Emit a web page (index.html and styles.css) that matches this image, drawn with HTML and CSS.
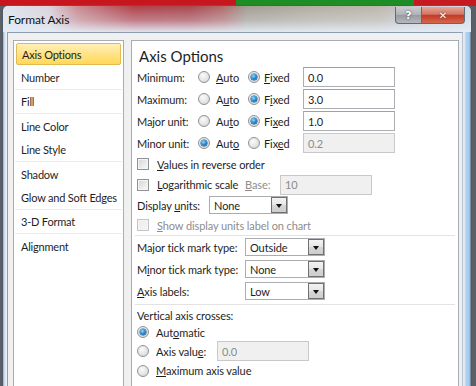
FILE: index.html
```html
<!DOCTYPE html>
<html lang="en">
<head>
    <meta charset="UTF-8">
    <meta name="viewport" content="width=device-width, initial-scale=1.0">
    <title>Format Axis</title>
    <link rel="stylesheet" href="styles.css">
</head>
<body>
    <div class="window">
        <div class="titlebar">
            <span class="title">Format Axis</span>
            <div class="caption-buttons">
                <span class="cap-btn help">?</span>
                <span class="cap-btn close">&#x2715;</span>
            </div>
        </div>
        <div class="client">
            <ul class="nav-list">
                <li class="nav-item selected">Axis Options</li>
                <li class="nav-item sep">Number</li>
                <li class="nav-item sep">Fill</li>
                <li class="nav-item">Line Color</li>
                <li class="nav-item sep">Line Style</li>
                <li class="nav-item">Shadow</li>
                <li class="nav-item sep">Glow and Soft Edges</li>
                <li class="nav-item sep">3-D Format</li>
                <li class="nav-item">Alignment</li>
            </ul>

            <div class="panel">
                <h2 class="panel-title">Axis Options</h2>

                <div class="unit-row">
                    <span class="unit-label">Minimum:</span>
                    <span class="opt opt-auto"><span class="radio"></span><span><u>A</u>uto</span></span>
                    <span class="opt opt-fixed"><span class="radio checked"></span><span><u>F</u>ixed</span></span>
                    <span class="textbox">0.0</span>
                </div>
                <div class="unit-row">
                    <span class="unit-label">Maximum:</span>
                    <span class="opt opt-auto"><span class="radio"></span><span>A<u>u</u>to</span></span>
                    <span class="opt opt-fixed"><span class="radio checked"></span><span>F<u>i</u>xed</span></span>
                    <span class="textbox">3.0</span>
                </div>
                <div class="unit-row">
                    <span class="unit-label">Major unit:</span>
                    <span class="opt opt-auto"><span class="radio"></span><span>Au<u>t</u>o</span></span>
                    <span class="opt opt-fixed"><span class="radio checked"></span><span>Fi<u>x</u>ed</span></span>
                    <span class="textbox">1.0</span>
                </div>
                <div class="unit-row">
                    <span class="unit-label">Minor unit:</span>
                    <span class="opt opt-auto"><span class="radio checked"></span><span>Aut<u>o</u></span></span>
                    <span class="opt opt-fixed"><span class="radio"></span><span>Fix<u>e</u>d</span></span>
                    <span class="textbox disabled">0.2</span>
                </div>

                <div class="check-row h20">
                    <span class="checkbox"></span><span><u>V</u>alues in reverse order</span>
                </div>
                <div class="check-row h21">
                    <span class="checkbox"></span><span class="log-label"><u>L</u>ogarithmic scale</span>
                    <span class="muted base-label"><u>B</u>ase:</span>
                    <span class="textbox disabled">10</span>
                </div>
                <div class="check-row h20">
                    <span class="display-label">Display <u>u</u>nits:</span>
                    <span class="combo w-display"><span class="combo-text">None</span><span class="combo-btn"></span></span>
                </div>
                <div class="check-row h20 muted">
                    <span class="checkbox disabled"></span><span><u>S</u>how display units label on chart</span>
                </div>

                <div class="separator"></div>

                <div class="tick-row">
                    <span class="tick-label">Ma<u>j</u>or tick mark type:</span>
                    <span class="combo"><span class="combo-text">Outside</span><span class="combo-btn"></span></span>
                </div>
                <div class="tick-row">
                    <span class="tick-label">M<u>i</u>nor tick mark type:</span>
                    <span class="combo"><span class="combo-text">None</span><span class="combo-btn"></span></span>
                </div>
                <div class="tick-row">
                    <span class="tick-label"><u>A</u>xis labels:</span>
                    <span class="combo"><span class="combo-text">Low</span><span class="combo-btn"></span></span>
                </div>

                <div class="separator sep-low"></div>

                <div class="cross-title">Vertical axis crosses:</div>
                <div class="cross-row r-auto">
                    <span class="radio checked"></span><span>Aut<u>o</u>matic</span>
                </div>
                <div class="cross-row r-value">
                    <span class="radio"></span><span class="value-label">Axis valu<u>e</u>:</span>
                    <span class="textbox disabled">0.0</span>
                </div>
                <div class="cross-row r-max">
                    <span class="radio"></span><span><u>M</u>aximum axis value</span>
                </div>
            </div>
        </div>
    </div>
</body>
</html>
```

FILE: styles.css
```css
/* Format Axis dialog, Windows 7 look */
body {
    margin: 0;
    height: 386px;
    overflow: hidden;
    font-family: Lato, "Noto Sans", sans-serif;
    font-size: 11px;
    letter-spacing: -0.1px;
    color: #1e1e1e;
    background:
        linear-gradient(to right, #c8161e 0, #c8161e 236px, #1f8d25 236px, #1f8d25 414px, #c41a20 414px) top / 100% 6px no-repeat,
        #5b6068;
}

.window {
    margin: 5px 0 0 2px;
    width: 470px;
    height: 381px;
    box-sizing: border-box;
    border: 1px solid #4f5a66;
    border-bottom: none;
    border-radius: 6px 6px 0 0;
    background: linear-gradient(to right, #8cb0d8 0, #dfe8f1 2px, #e9eef4 4px, #e9eef4 calc(100% - 9px), #dfe6ee calc(100% - 6px), #a9cdf3 calc(100% - 5px), #a9cdf3 calc(100% - 2px), #6f7a86 100%);
    overflow: hidden;
}

.titlebar {
    height: 26px;
    display: flex;
    align-items: flex-start;
    background:
        linear-gradient(to bottom, rgba(228, 236, 246, 0) 0%, rgba(228, 236, 246, 0.35) 55%, rgba(228, 236, 246, 0.95) 100%),
        linear-gradient(to right, #dfe6ef 0%, #d9d3da 10%, #c98b91 16%, #b0414a 28%, #a94850 40%, #b06a6a 47%, #a39c92 52%, #b3aea1 66%, #bdb6ab 80%, #c8c9cc 88%, #d4dde8 100%);
}

.title {
    font-size: 12px;
    color: #111;
    margin: 6px 0 0 5px;
}

.caption-buttons {
    display: flex;
    margin: 1px 0 0 auto;
    margin-right: 6px;
}

.cap-btn {
    height: 17px;
    box-sizing: border-box;
    display: flex;
    align-items: center;
    justify-content: center;
    color: #fff;
    font-family: "DejaVu Sans", sans-serif;
    font-weight: bold;
    border: 1px solid #5e6a78;
    border-top: none;
    text-shadow: 0 0 2px #333;
}

.help {
    width: 27px;
    font-size: 11px;
    border-radius: 0 0 0 4px;
    background: linear-gradient(to bottom, #c9ccd1 0%, #aeb2b8 50%, #979ba1 51%, #b5b9be 100%);
}

.close {
    width: 43px;
    font-size: 10px;
    border-left: none;
    border-radius: 0 0 4px 0;
    background: linear-gradient(to bottom, #e5a597 0%, #d57565 45%, #c33b26 52%, #d4664d 100%);
}

.client {
    margin-left: 4px;
    width: 456px;
    height: 354px;
    box-sizing: border-box;
    border: 1px solid #8e9daf;
    border-bottom: none;
    border-right-color: #b9c3cf;
    background: #f0f0f0;
    display: flex;
    align-items: flex-start;
    padding: 7px 0 0 5px;
    gap: 7px;
}

/* left category list */
.nav-list {
    list-style: none;
    margin: 0;
    padding: 1px;
    width: 111px;
    height: 360px;
    box-sizing: border-box;
    background: #fff;
    border: 1px solid #a5acb5;
}

.nav-item {
    height: 24px;
    box-sizing: border-box;
    display: flex;
    align-items: center;
    padding-left: 6px;
    white-space: nowrap;
    letter-spacing: -0.2px;
}

.nav-item.sep {
    border-bottom: 1px solid #ececec;
}

.nav-item.selected {
    margin: 1px;
    height: 22px;
    padding-left: 5px;
    border: 1px solid #e0bb52;
    border-radius: 2px;
    background: linear-gradient(to bottom, #fff0b8 0%, #ffe48e 45%, #ffd955 100%);
}

/* right options panel */
.panel {
    width: 328px;
    height: 360px;
    box-sizing: border-box;
    background: #fff;
    border: 1px solid #a5acb5;
    padding: 5px 0 0 5px;
}

.panel-title {
    margin: 0;
    height: 20px;
    line-height: 20px;
    font-size: 15px;
    font-weight: normal;
    letter-spacing: 0;
    padding-left: 2px;
}

.unit-row,
.check-row,
.tick-row,
.cross-row {
    display: flex;
    align-items: center;
    white-space: nowrap;
}

.unit-row {
    height: 22px;
}

.unit-label {
    width: 61px;
}

.opt {
    display: flex;
    align-items: center;
    gap: 6px;
}

.opt-auto {
    width: 50px;
}

.opt-fixed {
    width: 55px;
    gap: 4px;
}

.textbox {
    width: 92px;
    height: 20px;
    box-sizing: border-box;
    border: 1px solid #abadb3;
    border-top-color: #9da0a7;
    padding-left: 4px;
    display: flex;
    align-items: center;
    background: #fff;
}

.textbox.disabled {
    background: #f0f0f0;
    border-color: #c9c9c9;
    color: #8b8b8b;
}

.radio {
    width: 12px;
    height: 12px;
    flex: none;
    box-sizing: border-box;
    border-radius: 50%;
    border: 1px solid #8f9396;
    background: radial-gradient(circle at 40% 35%, #fbfbfb 0%, #e2e2e2 60%, #cfcfcf 100%);
    display: flex;
    align-items: center;
    justify-content: center;
}

.radio.checked::after {
    content: "";
    width: 6px;
    height: 6px;
    border-radius: 50%;
    background: radial-gradient(circle at 40% 35%, #8fe0ff 0%, #2a8fd6 45%, #114c8c 100%);
    box-shadow: 0 0 0 0.5px #1c4f7e;
}

.checkbox {
    width: 12px;
    height: 12px;
    flex: none;
    box-sizing: border-box;
    border: 1px solid #8f9396;
    background: linear-gradient(135deg, #d5d5d5 0%, #e8e8e8 50%, #fafafa 100%);
    box-shadow: inset 0 0 0 1px #f4f4f4;
}

.checkbox.disabled {
    border-color: #c2c4c6;
    background: linear-gradient(135deg, #ececec 0%, #f5f5f5 100%);
}

.check-row {
    gap: 8px;
}

.h20 {
    height: 20px;
}

.h21 {
    height: 21px;
}

.log-label {
    width: 80px;
}

.base-label {
    width: 27px;
}

.muted {
    color: #8d8d8d;
}

.display-label {
    width: 64px;
}

.combo {
    width: 80px;
    height: 18px;
    box-sizing: border-box;
    border: 1px solid #abadb3;
    display: flex;
    align-items: stretch;
    background: #fff;
}

.combo.w-display {
    width: 79px;
}

.combo-text {
    flex: 1;
    display: flex;
    align-items: center;
    padding-left: 4px;
}

.combo-btn {
    width: 16px;
    box-sizing: border-box;
    border: 1px solid #707070;
    background: linear-gradient(to bottom, #f3f3f3 0%, #e6e6e6 50%, #d6d6d6 51%, #cdcdcd 100%);
    display: flex;
    align-items: center;
    justify-content: center;
}

.combo-btn::after {
    content: "";
    border-left: 3.5px solid transparent;
    border-right: 3.5px solid transparent;
    border-top: 4px solid #111;
    margin-top: 1px;
}

.separator {
    height: 1px;
    width: 320px;
    margin-left: -2px;
    background: #e3e3e3;
}

.sep-low {
    margin-top: 2px;
}

.tick-row {
    height: 22px;
}

.tick-label {
    width: 108px;
}

.cross-title {
    height: 18px;
    display: flex;
    align-items: center;
    margin-top: 1px;
}

.cross-row {
    gap: 7px;
}

.r-auto {
    height: 16px;
}

.r-value {
    height: 22px;
}

.r-max {
    height: 17px;
}

.value-label {
    width: 54px;
}
```
